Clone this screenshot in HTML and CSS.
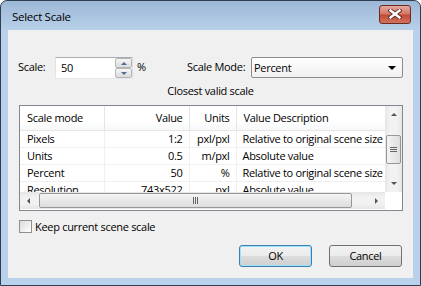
FILE: index.html
```html
<!DOCTYPE html>
<html lang="en">
<head>
    <meta charset="UTF-8">
    <meta name="viewport" content="width=device-width, initial-scale=1.0">
    <title>Select Scale</title>
    <link rel="stylesheet" href="styles.css">
</head>
<body>
    <div class="window">
        <div class="titlebar">
            <span class="title">Select Scale</span>
            <div class="close">
                <svg width="14" height="10" viewBox="0 0 14 10">
                    <path d="M2.5 1.5 L11.5 8.5 M11.5 1.5 L2.5 8.5" stroke="#5a2a24" stroke-width="4.2" stroke-linecap="square"/>
                    <path d="M2.5 1.5 L11.5 8.5 M11.5 1.5 L2.5 8.5" stroke="#fff" stroke-width="2.4" stroke-linecap="square"/>
                </svg>
            </div>
        </div>

        <div class="client">
            <div class="scale-row">
                <span class="lbl-scale">Scale:</span>
                <div class="spin">
                    <span class="spin-value">50</span>
                    <div class="spin-btns">
                        <span class="spin-btn"><span class="tri-up"></span></span>
                        <span class="spin-btn"><span class="tri-down"></span></span>
                    </div>
                </div>
                <span class="pct">%</span>
                <span class="lbl-mode">Scale Mode:</span>
                <div class="select">
                    <span>Percent</span>
                    <span class="select-arrow"></span>
                </div>
            </div>

            <div class="caption">Closest valid scale</div>

            <div class="list">
                <div class="list-view">
                    <table class="grid">
                        <thead>
                            <tr>
                                <th class="c-mode">Scale mode</th>
                                <th class="c-value num">Value</th>
                                <th class="c-units num">Units</th>
                                <th class="c-desc">Value Description</th>
                            </tr>
                        </thead>
                        <tbody>
                            <tr><td>Pixels</td><td class="num">1:2</td><td class="num">pxl/pxl</td><td class="desc">Relative to original scene size</td></tr>
                            <tr><td>Units</td><td class="num">0.5</td><td class="num">m/pxl</td><td class="desc">Absolute value</td></tr>
                            <tr><td>Percent</td><td class="num">50</td><td class="num">%</td><td class="desc">Relative to original scene size</td></tr>
                            <tr><td>Resolution</td><td class="num">743x522</td><td class="num">pxl</td><td class="desc">Absolute value</td></tr>
                        </tbody>
                    </table>
                </div>
                <div class="vscroll">
                    <span class="sb-arrow"><span class="tri-up dark"></span></span>
                    <span class="vthumb"><span class="grip-h"></span></span>
                    <span class="sb-arrow"><span class="tri-down dark"></span></span>
                </div>
                <div class="hscroll">
                    <span class="sb-arrow h"><span class="tri-left"></span></span>
                    <span class="hthumb"><span class="grip-v"></span></span>
                    <span class="sb-arrow h"><span class="tri-right"></span></span>
                </div>
                <div class="corner"></div>
            </div>

            <div class="check-row">
                <span class="checkbox"></span>
                <span>Keep current scene scale</span>
            </div>

            <div class="buttons">
                <div class="btn default">OK</div>
                <div class="btn">Cancel</div>
            </div>
        </div>
    </div>
</body>
</html>
```

FILE: styles.css
```css
body {
    margin: 0;
    background-color: #fff;
    font-family: "Open Sans", "Noto Sans", sans-serif;
    font-size: 11px;
    letter-spacing: -0.3px;
    color: #000;
}
.window {
    width: 421px;
    height: 286px;
    box-sizing: border-box;
    border: 1px solid #2f3f52;
    border-radius: 7px 7px 0 0;
    background: linear-gradient(to bottom, #9db8d6 0, #b9d1ea 30px, #b9d1ea 100%);
    padding: 0 7px 7px 7px;
    display: flex;
    flex-direction: column;
}
.titlebar {
    height: 29px;
    display: flex;
    align-items: center;
    justify-content: space-between;
    padding-left: 4px;
}
.title {
    font-size: 11.5px;
    margin-top: 1px;
}
.close {
    width: 30px;
    height: 17px;
    margin-right: 2px;
    margin-top: -3px;
    border: 1px solid #6b2a22;
    border-radius: 3px;
    background: linear-gradient(to bottom, #e6a89e 0, #d47867 45%, #c24a37 55%, #d2735e 100%);
    display: flex;
    align-items: center;
    justify-content: center;
}
.client {
    flex: 1;
    background-color: #f0f0f0;
    padding: 27px 10px 0 10px;
}
.scale-row {
    display: flex;
    align-items: flex-start;
    height: 22px;
}
.lbl-scale {
    width: 37px;
    line-height: 20px;
}
.spin {
    width: 78px;
    height: 22px;
    box-sizing: border-box;
    border: 1px solid #abadb3;
    border-color: #abadb3 #dbdfe6 #e3e9ef #e2e3ea;
    background-color: #fff;
    display: flex;
    justify-content: space-between;
}
.spin-value {
    padding-left: 5px;
    line-height: 19px;
}
.spin-btns {
    width: 17px;
    display: flex;
    flex-direction: column;
}
.spin-btn {
    flex: 1;
    border: 1px solid #b5b5b5;
    border-radius: 2px;
    background: linear-gradient(to bottom, #f6f6f6, #dcdcdc);
    display: flex;
    align-items: center;
    justify-content: center;
}
.tri-up, .tri-down, .tri-left, .tri-right {
    width: 0;
    height: 0;
    border: 3px solid transparent;
}
.tri-up {
    border-bottom: 3px solid #4f6a95;
    border-top: 0;
}
.tri-down {
    border-top: 3px solid #4f6a95;
    border-bottom: 0;
}
.tri-up.dark {
    border-bottom-color: #555;
}
.tri-down.dark {
    border-top-color: #555;
}
.tri-left {
    border-right: 3px solid #555;
    border-left: 0;
}
.tri-right {
    border-left: 3px solid #555;
    border-right: 0;
}
.pct {
    margin-left: 4px;
    width: 50px;
    line-height: 20px;
}
.lbl-mode {
    width: 64px;
    line-height: 20px;
}
.select {
    flex: 1;
    height: 21px;
    box-sizing: border-box;
    border: 1px solid #8c8c8c;
    border-radius: 2px;
    background: linear-gradient(to bottom, #fefefe, #f1f1f1);
    display: flex;
    align-items: center;
    justify-content: space-between;
    padding: 0 6px 0 2px;
}
.select-arrow {
    width: 0;
    height: 0;
    border-left: 4px solid transparent;
    border-right: 4px solid transparent;
    border-top: 4px solid #000;
}
.caption {
    margin-top: 4px;
    line-height: 16px;
    text-align: center;
}
.list {
    margin: 6px 0 0 1px;
    height: 106px;
    box-sizing: border-box;
    border: 1px solid #828790;
    background-color: #fff;
    display: grid;
    grid-template-columns: 365px 17px;
    grid-template-rows: 86px 17px;
}
.list-view {
    overflow: hidden;
}
.grid {
    border-collapse: collapse;
    table-layout: fixed;
    width: 406px;
}
.grid th, .grid td {
    box-sizing: border-box;
    font-weight: normal;
    text-align: left;
    white-space: nowrap;
    overflow: hidden;
    padding: 0 6px 0 7px;
}
.grid th {
    height: 24px;
    border-right: 1px solid #e5e5e5;
    border-bottom: 1px solid #e5e5e5;
    background: linear-gradient(to bottom, #fff 60%, #f7f8f9);
}
.grid td {
    height: 16px;
    line-height: 16px;
    border-right: 1px solid #f0f0f0;
    border-bottom: 1px solid #f0f0f0;
}
.grid .num {
    text-align: right;
}
.grid .desc, .c-desc {
    padding-left: 6px;
}
.c-mode { width: 84px; }
.c-value { width: 85px; }
.c-units { width: 47px; }
.c-desc { width: 190px; }
.vscroll {
    background: linear-gradient(to right, #e6e6e6, #f2f2f2 30%, #f2f2f2 70%, #e6e6e6);
    display: flex;
    flex-direction: column;
    justify-content: space-between;
}
.sb-arrow {
    height: 17px;
    display: flex;
    align-items: center;
    justify-content: center;
}
.sb-arrow.h {
    width: 17px;
    height: auto;
}
.vthumb {
    height: 27px;
    margin: 0 1px;
    border: 1px solid #979797;
    border-radius: 2px;
    background: linear-gradient(to right, #f4f4f4, #dedede);
    display: flex;
    align-items: center;
    justify-content: center;
}
.grip-h {
    width: 7px;
    height: 5px;
    background: repeating-linear-gradient(to bottom, #666 0, #666 1px, transparent 1px, transparent 2px);
}
.hscroll {
    background: linear-gradient(to bottom, #e6e6e6, #f2f2f2 30%, #f2f2f2 70%, #e6e6e6);
    display: flex;
}
.hthumb {
    width: 311px;
    margin: 1px 2px;
    border: 1px solid #979797;
    border-radius: 2px;
    background: linear-gradient(to bottom, #f4f4f4, #dedede);
    display: flex;
    align-items: center;
    justify-content: center;
}
.hscroll .sb-arrow.h:last-child {
    margin-left: auto;
}
.grip-v {
    width: 5px;
    height: 7px;
    background: repeating-linear-gradient(to right, #666 0, #666 1px, transparent 1px, transparent 2px);
}
.corner {
    background-color: #fff;
}
.check-row {
    margin: 9px 0 0 1px;
    display: flex;
    align-items: center;
    gap: 3px;
    height: 13px;
}
.checkbox {
    width: 13px;
    height: 13px;
    box-sizing: border-box;
    border: 1px solid #8e8f8f;
    background: linear-gradient(to bottom right, #dcdcdc, #fefefe);
}
.buttons {
    margin-top: 12px;
    display: flex;
    justify-content: flex-end;
    gap: 17px;
    padding-right: 1px;
}
.btn {
    width: 73px;
    height: 22px;
    box-sizing: border-box;
    border: 1px solid #707070;
    border-radius: 3px;
    background: linear-gradient(to bottom, #f2f2f2 0, #ebebeb 50%, #dddddd 50%, #cfcfcf 100%);
    text-align: center;
    line-height: 20px;
}
.btn.default {
    border-color: #3c7fb1;
    box-shadow: inset 0 0 0 1px #9ee1fb;
}
```
